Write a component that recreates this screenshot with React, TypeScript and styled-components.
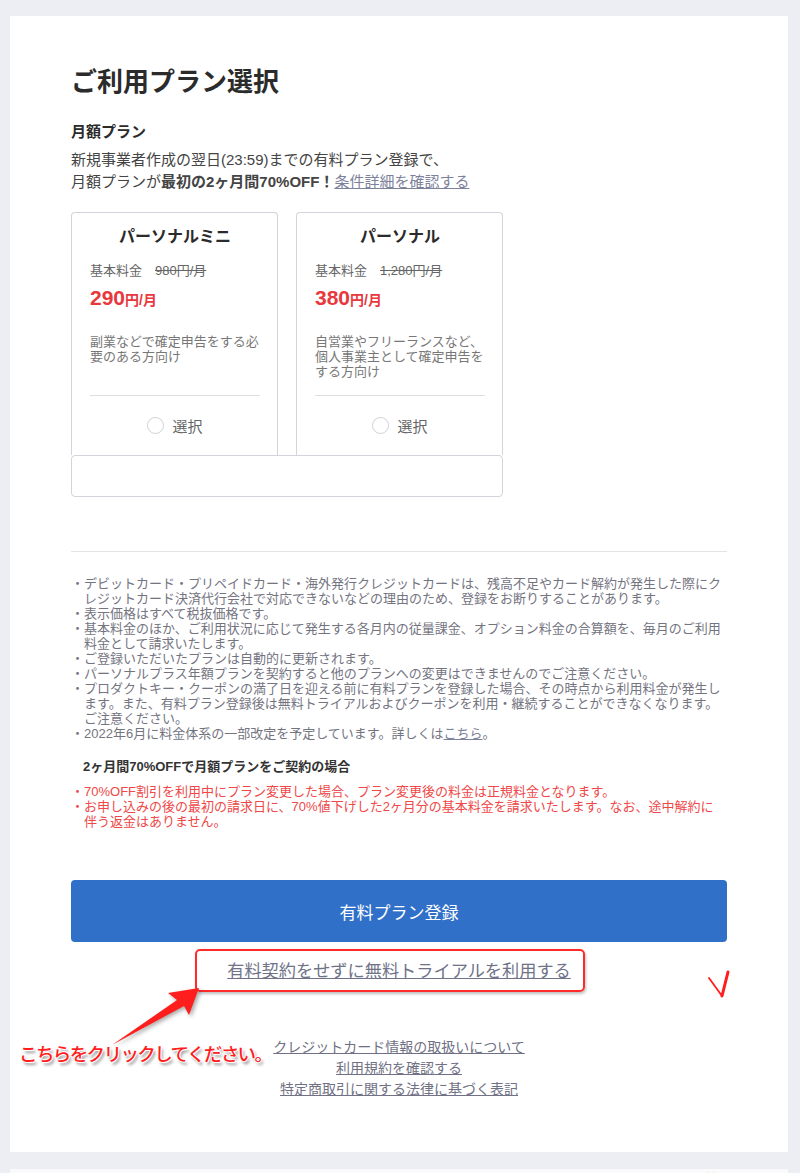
import React from 'react'
import styled, { createGlobalStyle } from 'styled-components'

const GlobalStyle = createGlobalStyle`
  body {
    margin: 0;
    background: #eceef3;
    color: #333;
    font-family: "Liberation Sans", "Noto Sans CJK JP", sans-serif;
  }
`;

const Page = styled.div`
  padding: 16px 12px 0 10px;
`;

const Panel = styled.main`
  position: relative;
  background: #fff;
  padding: 48px 61px 52px 61px;
`;

const Title = styled.h1`
  margin: 0;
  font-size: 26px;
  line-height: 36px;
  font-weight: bold;
  color: #2b2b2b;
`;

const SectionHeading = styled.h2`
  margin: 21px 0 0;
  font-size: 15px;
  line-height: 22px;
  font-weight: bold;
  color: #2b2b2b;
`;

const Lead = styled.p`
  margin: 6px 0 0;
  font-size: 15px;
  line-height: 22px;
  color: #444;
`;

const TextLink = styled.a`
  color: #7d829c;
  text-decoration: underline;
`;

const CardRow = styled.div`
  display: flex;
  gap: 18px;
  margin-top: 19px;
`;

const Card = styled.div`
  width: 207px;
  box-sizing: border-box;
  border: 1px solid #d3d4dc;
  border-bottom: none;
  border-radius: 4px 4px 0 0;
  padding: 13px 17px 18px 18px;
`;

const CardTitle = styled.div`
  text-align: center;
  font-size: 16px;
  line-height: 22px;
  font-weight: bold;
  color: #2b2b2b;
`;

const OldPrice = styled.div`
  margin-top: 14px;
  font-size: 13px;
  line-height: 18px;
  color: #666;
  s {
    margin-left: 13px;
  }
`;

const NewPrice = styled.div`
  margin-top: 5px;
  line-height: 26px;
  color: #e8383d;
  font-weight: bold;
`;

const PriceNumber = styled.span`
  font-size: 21px;
`;

const PriceUnit = styled.span`
  font-size: 14px;
`;

const Description = styled.p`
  margin: 21px 0 0;
  min-height: 45px;
  font-size: 13px;
  line-height: 15px;
  color: #777;
`;

const CardDivider = styled.hr`
  margin: 16px 0 0;
  border: none;
  border-top: 1px solid #dedede;
`;

const RadioRow = styled.label`
  margin-top: 17px;
  display: flex;
  align-items: center;
  justify-content: center;
  gap: 8px;
  height: 24px;
  font-size: 15px;
  color: #666;
`;

const RadioCircle = styled.span`
  width: 17px;
  height: 17px;
  box-sizing: border-box;
  border: 1.5px solid #cfd0d6;
  border-radius: 50%;
`;

const ExtraBox = styled.div`
  width: 432px;
  height: 42px;
  box-sizing: border-box;
  border: 1px solid #d3d4dc;
  border-radius: 4px;
`;

const Rule = styled.hr`
  margin: 54px 0 0;
  border: none;
  border-top: 1px solid #e4e4e8;
`;

const NoteList = styled.ul<{ $tone?: 'gray' | 'red' }>`
  margin: ${p => (p.$tone === 'red' ? '8px' : '24px')} 0 0;
  padding: 0 0 0 13px;
  list-style: none;
  font-size: 13px;
  line-height: 15px;
  color: ${p => (p.$tone === 'red' ? '#ee4848' : '#74747f')};
  li::before {
    content: "・";
    display: inline-block;
    width: 13px;
    margin-left: -13px;
  }
`;

const SubHeading = styled.h3`
  margin: 17px 0 0;
  padding-left: 12px;
  font-size: 13px;
  line-height: 18px;
  font-weight: bold;
  color: #333;
`;

const PrimaryButton = styled.button`
  display: block;
  width: 100%;
  height: 62px;
  margin-top: 51px;
  border: none;
  border-radius: 4px;
  background: #3070c9;
  color: #fff;
  font-family: inherit;
  font-size: 17px;
`;

const TrialRow = styled.div`
  margin-top: 17px;
  text-align: center;
  font-size: 17.2px;
  line-height: 24px;
`;

const TrialLink = styled.a`
  color: #6f7388;
  text-decoration: underline;
`;

const FooterLinks = styled.nav`
  margin-top: 54px;
  display: flex;
  flex-direction: column;
  align-items: center;
  font-size: 14px;
  line-height: 21px;
`;

const FooterLink = styled.a`
  color: #707184;
  text-decoration: underline;
`;

/* annotation overlays drawn over the screenshot */
const HighlightBox = styled.div`
  position: absolute;
  left: 185px;
  top: 933px;
  width: 390px;
  height: 43px;
  box-sizing: border-box;
  border: 2px solid #ff2b2b;
  border-radius: 5px;
  box-shadow: 1px 2px 3px rgba(0, 0, 0, 0.25);
`;

const ArrowSvg = styled.svg`
  position: absolute;
  left: 80px;
  top: 954px;
  filter: drop-shadow(2px 2px 2px rgba(0, 0, 0, 0.35));
`;

const CheckSvg = styled.svg`
  position: absolute;
  left: 696px;
  top: 950px;
`;

const Callout = styled.div`
  position: absolute;
  left: 9px;
  top: 1025px;
  font-size: 18.5px;
  line-height: 28px;
  letter-spacing: -1.6px;
  font-weight: 500;
  color: #ff1e1e;
  text-shadow: -1px 0 #fff, 1px 0 #fff, 0 -1px #fff, 0 1px #fff,
    2px 3px 3px rgba(0, 0, 0, 0.45);
`;

const BottomStrip = styled.div`
  margin-top: 17px;
  background: #fafafa;
  display: flex;
  gap: 200px;
  padding: 2px 0 0 70px;
  font-size: 16px;
  line-height: 22px;
  font-weight: bold;
  color: #222;
`;

const noteItems = [
  ['デビットカード・プリペイドカード・海外発行クレジットカードは、残高不足やカード解約が発生した際にク', 'レジットカード決済代行会社で対応できないなどの理由のため、登録をお断りすることがあります。'],
  ['表示価格はすべて税抜価格です。'],
  ['基本料金のほか、ご利用状況に応じて発生する各月内の従量課金、オプション料金の合算額を、毎月のご利用', '料金として請求いたします。'],
  ['ご登録いただいたプランは自動的に更新されます。'],
  ['パーソナルプラス年額プランを契約すると他のプランへの変更はできませんのでご注意ください。'],
  ['プロダクトキー・クーポンの満了日を迎える前に有料プランを登録した場合、その時点から利用料金が発生し', 'ます。また、有料プラン登録後は無料トライアルおよびクーポンを利用・継続することができなくなります。', 'ご注意ください。'],
];

const plans = [
  {
    name: 'パーソナルミニ',
    oldPrice: '980円/月',
    price: '290',
    desc: ['副業などで確定申告をする必', '要のある方向け'],
  },
  {
    name: 'パーソナル',
    oldPrice: '1,280円/月',
    price: '380',
    desc: ['自営業やフリーランスなど、', '個人事業主として確定申告を', 'する方向け'],
  },
];

const Lines = ({ lines }: { lines: string[] }) => (
  <>
    {lines.map((l, i) => (
      <React.Fragment key={i}>
        {i > 0 && <br />}
        {l}
      </React.Fragment>
    ))}
  </>
);

export default function App() {
  return (
    <Page>
      <GlobalStyle />
      <Panel>
        <Title>ご利用プラン選択</Title>
        <SectionHeading>月額プラン</SectionHeading>
        <Lead>
          新規事業者作成の翌日(23:59)までの有料プラン登録で、
          <br />
          月額プランが<b>最初の2ヶ月間70%OFF！</b>
          <TextLink>条件詳細を確認する</TextLink>
        </Lead>

        <CardRow>
          {plans.map(p => (
            <Card key={p.name}>
              <CardTitle>{p.name}</CardTitle>
              <OldPrice>
                基本料金<s>{p.oldPrice}</s>
              </OldPrice>
              <NewPrice>
                <PriceNumber>{p.price}</PriceNumber>
                <PriceUnit>円/月</PriceUnit>
              </NewPrice>
              <Description>
                <Lines lines={p.desc} />
              </Description>
              <CardDivider />
              <RadioRow>
                <RadioCircle />
                選択
              </RadioRow>
            </Card>
          ))}
        </CardRow>
        <ExtraBox />

        <Rule />

        <NoteList>
          {noteItems.map((item, i) => (
            <li key={i}>
              <Lines lines={item} />
            </li>
          ))}
          <li>
            2022年6月に料金体系の一部改定を予定しています。詳しくは<TextLink>こちら</TextLink>。
          </li>
        </NoteList>

        <SubHeading>2ヶ月間70%OFFで月額プランをご契約の場合</SubHeading>
        <NoteList $tone="red">
          <li>70%OFF割引を利用中にプラン変更した場合、プラン変更後の料金は正規料金となります。</li>
          <li>
            お申し込みの後の最初の請求日に、70%値下げした2ヶ月分の基本料金を請求いたします。なお、途中解約に
            <br />
            伴う返金はありません。
          </li>
        </NoteList>

        <PrimaryButton>有料プラン登録</PrimaryButton>

        <TrialRow>
          <TrialLink>有料契約をせずに無料トライアルを利用する</TrialLink>
        </TrialRow>

        <FooterLinks>
          <FooterLink>クレジットカード情報の取扱いについて</FooterLink>
          <FooterLink>利用規約を確認する</FooterLink>
          <FooterLink>特定商取引に関する法律に基づく表記</FooterLink>
        </FooterLinks>

        <HighlightBox />
        <ArrowSvg width="120" height="80" viewBox="0 0 120 80">
          <polygon points="109,18 78,23 87,30 22,75 94,36 99,45" fill="#ff1e1e" />
        </ArrowSvg>
        <CheckSvg width="30" height="36" viewBox="0 0 30 36">
          <path d="M3 12 L16 30" stroke="#ff1e1e" strokeWidth="1.8" strokeLinecap="round" fill="none" />
          <path d="M16 30 L22 6" stroke="#ff1e1e" strokeWidth="3" strokeLinecap="round" fill="none" />
        </CheckSvg>
        <Callout>こちらをクリックしてください。</Callout>
      </Panel>
      <BottomStrip>
        <span>上部へ</span>
        <span>ヘルプ</span>
        <span>よくある質問と回答一覧</span>
      </BottomStrip>
    </Page>
  );
}
